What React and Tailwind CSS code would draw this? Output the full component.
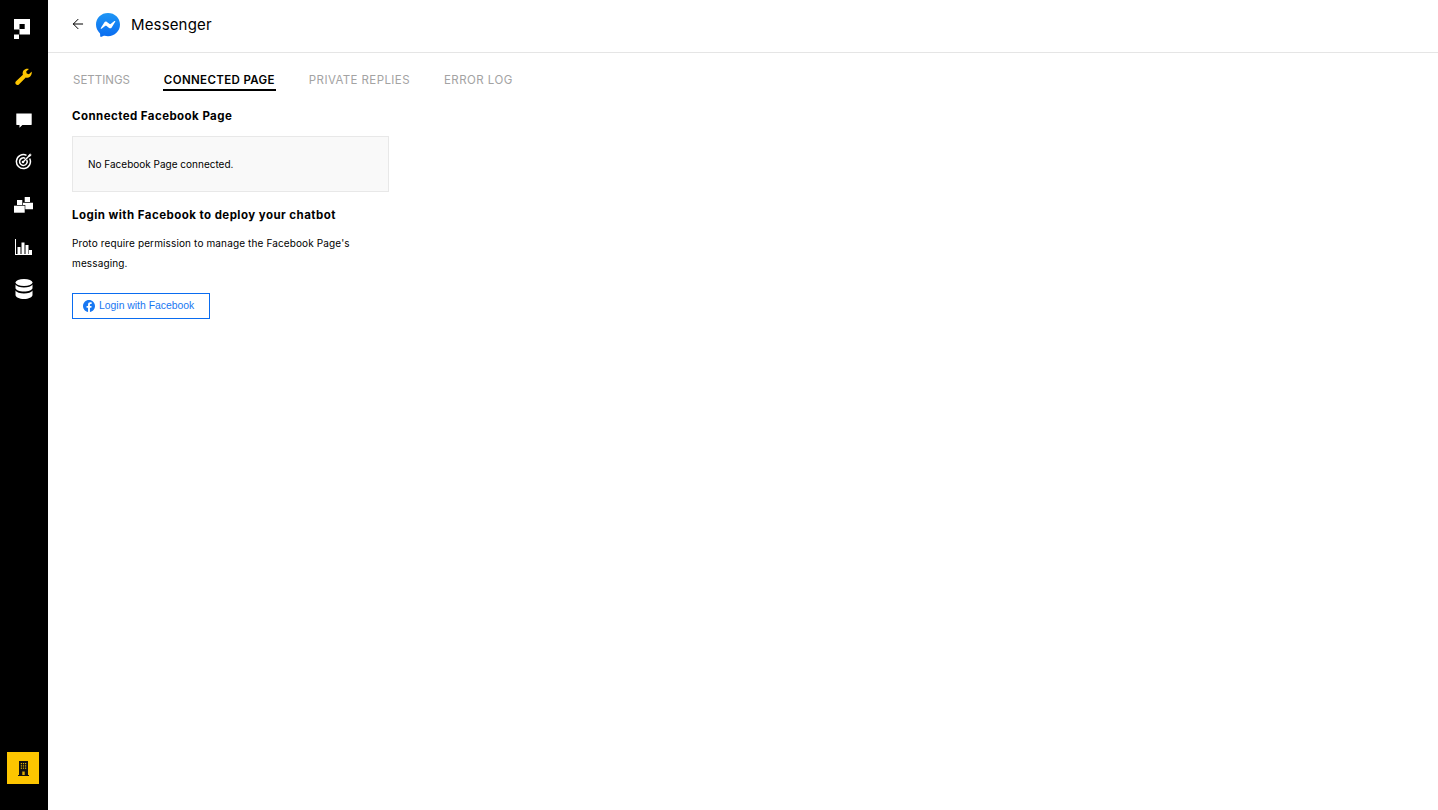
import React from 'react';
import { ArrowLeft } from 'lucide-react';

const Logo = () => (
  <svg width="16" height="20" viewBox="0 0 16 20" fill="#fff">
    <path fillRule="evenodd" d="M0 0h16v15.500H5.500V10.500H0V0zM5.500 5v5h5.200V5H5.500z" />
    <rect x="0" y="15.500" width="5" height="4.500" />
  </svg>
);

const Wrench = () => (
  <svg width="18" height="18" viewBox="0 0 18 18" fill="#fdc500">
    <path d="M16.800 3.600l-2.900 2.600-2.200-.6-.5-2.200L13.900.9c-1.900-.6-4-.1-5.200 1.300-1.100 1.300-1.300 3-.8 4.500L1 13.300c-.9.900-.9 2.200-.1 3 .8.900 2.100.9 3 .1l6.900-6.900c1.500.4 3.100.1 4.400-1 1.400-1.300 1.900-3.200 1.400-4.900h.2z" />
  </svg>
);

const Chat = () => (
  <svg width="16" height="16" viewBox="0 0 16 16" fill="#fff">
    <path d="M.700.400h14.600c.200 0 .4.200.4.400v10.800c0 .2-.2.400-.4.400H6.400l-2.900 2.800v-2.800H.700c-.2 0-.4-.2-.4-.4V.800c0-.2.200-.4.400-.4z" />
  </svg>
);

const Target = () => (
  <svg width="17" height="17" viewBox="0 0 17 17" fill="none" stroke="#fff">
    <path strokeWidth="1.500" d="M11.500 2.300A7 7 0 1 0 14.700 5.500" />
    <path strokeWidth="1.500" d="M10.200 5.300a3.800 3.800 0 1 0 1.500 1.500" />
    <path strokeWidth="1.400" d="M7.800 9.200 14.500 2.500" />
    <path fill="#fff" stroke="none" d="M13.400 2.200 15.300.3l.3 1.200 1.200.3-1.900 1.900-1.500-.1z" />
    <circle cx="8" cy="9" r="1.300" fill="#fff" stroke="none" />
  </svg>
);

const Blocks = () => (
  <svg width="19" height="16" viewBox="0 0 19 16" fill="#fff">
    <rect x="3" y="3" width="5.300" height="5" />
    <rect x="0" y="8.700" width="10.700" height="7" />
    <rect x="10.700" y="0" width="5.300" height="5" />
    <path d="M9 5.700h10v6.600h-7.700V8H9V5.700z" />
  </svg>
);

const Bars = () => (
  <svg width="17" height="16" viewBox="0 0 17 16" fill="#fff">
    <rect x="0" y="0" width="1" height="16" />
    <rect x="0" y="15" width="17" height="1" />
    <rect x="2.500" y="8" width="3" height="7" />
    <rect x="6.500" y="3.500" width="3" height="11.500" />
    <rect x="10.500" y="6" width="3" height="9" />
    <rect x="14" y="11" width="3" height="4" />
  </svg>
);

const Database = () => (
  <svg width="18" height="20" viewBox="0 0 18 20" fill="#fff">
    <ellipse cx="9" cy="3.500" rx="8.500" ry="3.500" />
    <path d="M.500 5.500C1.500 7.500 5 8.500 9 8.500s7.500-1 8.500-3v3.500c0 1.900-3.800 3.500-8.500 3.500S.500 10.900.500 9V5.500z" />
    <path d="M.500 11.500c1 2 4.500 3 8.500 3s7.500-1 8.500-3V16c0 2.200-3.800 4-8.500 4S.500 18.200.500 16v-4.500z" />
  </svg>
);

const Building = () => (
  <svg width="11" height="15" viewBox="0 0 11 15">
    <path fill="#111" d="M1 0h9v14h1v1H0v-1h1V0z" />
    <g fill="#e0ae00">
      <rect x="2.800" y="2" width="1.200" height="1.200" />
      <rect x="4.900" y="2" width="1.200" height="1.200" />
      <rect x="7" y="2" width="1.200" height="1.200" />
      <rect x="2.800" y="4.300" width="1.200" height="1.200" />
      <rect x="4.900" y="4.300" width="1.200" height="1.200" />
      <rect x="7" y="4.300" width="1.200" height="1.200" />
      <rect x="2.800" y="6.600" width="1.200" height="1.200" />
      <rect x="4.900" y="6.600" width="1.200" height="1.200" />
      <rect x="7" y="6.600" width="1.200" height="1.200" />
      <rect x="4.300" y="10.500" width="2.400" height="3.500" />
    </g>
  </svg>
);

const MessengerLogo = () => (
  <svg width="24" height="24" viewBox="0 0 24 24">
    <defs>
      <linearGradient id="mg" x1="0.500" y1="1" x2="0.500" y2="0">
        <stop offset="0" stopColor="#0a6cf0" />
        <stop offset="1" stopColor="#1e96f5" />
      </linearGradient>
    </defs>
    <path fill="url(#mg)" d="M12 0C5.300 0 0 4.900 0 11.600c0 3.500 1.400 6.500 3.800 8.600.2.200.3.400.3.700l.1 2.100c0 .7.700 1.100 1.300.8l2.400-1c.2-.1.400-.1.600-.1 1.100.3 2.300.5 3.500.5 6.700 0 12-4.900 12-11.600S18.700 0 12 0z" />
    <path fill="#fff" d="M4.800 15l3.500-5.600c.6-.9 1.700-1.100 2.600-.5l2.800 2.100c.3.200.6.200.9 0l3.800-2.900c.5-.4 1.200.2.800.7l-3.500 5.600c-.6.900-1.700 1.100-2.600.5l-2.800-2.100c-.3-.2-.6-.2-.9 0l-3.800 2.900c-.5.400-1.200-.2-.8-.7z" />
  </svg>
);

const FacebookIcon = () => (
  <svg width="12" height="12" viewBox="0 0 24 24" fill="#1877f2">
    <path d="M24 12c0-6.600-5.400-12-12-12S0 5.400 0 12c0 6 4.400 11 10.100 11.900v-8.400H7.100V12h3V9.400c0-3 1.800-4.700 4.500-4.700 1.300 0 2.700.2 2.700.2v3h-1.500c-1.500 0-2 .9-2 1.900V12h3.400l-.5 3.500h-2.800v8.400C19.600 23 24 18 24 12z" />
  </svg>
);

const navIcons = [
  { icon: Wrench, h: 'h-[42px]' },
  { icon: Chat, h: 'h-[42px] pt-[4px]' },
  { icon: Target, h: 'h-[42px] pr-[1px]' },
  { icon: Blocks, h: 'h-[44px] pr-[1px] pt-[2px]' },
  { icon: Bars, h: 'h-[42px] pr-[1px]' },
  { icon: Database, h: 'h-[42px] pr-[1px]' },
];

const tabs = [
  { label: 'SETTINGS', className: 'text-[#a3a3a3]' },
  { label: 'CONNECTED PAGE', className: 'font-semibold tracking-[0.36px] border-b-2 border-black' },
  { label: 'PRIVATE REPLIES', className: 'text-[#a3a3a3] tracking-[0.4px]' },
  { label: 'ERROR LOG', className: 'text-[#a3a3a3] tracking-[0.45px]' },
];

export default function App() {
  return (
    <div className="flex h-[810px] bg-white font-['Inter',sans-serif] text-black overflow-hidden">
      {/* Sidebar */}
      <aside className="w-12 shrink-0 bg-black flex flex-col items-center justify-between pb-[26px]">
        <div className="flex flex-col items-center w-full">
          <div className="h-[56px] w-full flex items-center justify-center pr-[4px] pt-[2px]">
            <Logo />
          </div>
          {navIcons.map((item, i) => (
            <div key={i} className={`${item.h} w-full flex items-center justify-center`}>
              <item.icon />
            </div>
          ))}
        </div>
        <div className="w-8 h-8 mr-[2px] bg-[#fdc500] flex items-center justify-center">
          <Building />
        </div>
      </aside>

      <main className="flex-1 min-w-0">
        {/* Header */}
        <header className="h-[53px] border-b border-[#e5e5e5] flex items-center pl-[22px] pb-[3px]">
          <ArrowLeft size={16} strokeWidth={1.5} className="text-black -mt-[1px]" />
          <div className="ml-[10px]">
            <MessengerLogo />
          </div>
          <h1 className="ml-[11px] pt-[1px] text-[15px] font-normal tracking-[0.15px]">Messenger</h1>
        </header>

        <div className="pl-6 pt-[19px]">
          {/* Tabs */}
          <div className="flex gap-[32px] text-[11.500px]">
            {tabs.map((tab) => (
              <div key={tab.label} className={`h-[19px] px-[1px] leading-[16px] ${tab.className}`}>
                {tab.label}
              </div>
            ))}
          </div>

          <div className="w-[317px]">
            <h2 className="mt-[17px] text-[11.500px] font-bold leading-[16px] tracking-[0.44px]">Connected Facebook Page</h2>
            <div className="mt-[12px] h-[56px] bg-[#f9f9f9] border border-[#e8e8e8] flex items-center pl-[15px] text-[10px]">
              No Facebook Page connected.
            </div>
            <h2 className="mt-[15px] text-[11.500px] font-bold leading-[16px] tracking-[0.45px]">Login with Facebook to deploy your chatbot</h2>
            <p className="mt-[10px] text-[10px] leading-[20px] tracking-[0.13px]">
              Proto require permission to manage the Facebook Page's messaging.
            </p>
            <button className="mt-[20px] w-[138px] h-[26px] border border-[#0a6cf0] flex items-center pl-[10px] gap-[4px] text-[10.400px] text-[#1877f2] font-['Liberation_Sans',sans-serif]">
              <FacebookIcon />
              Login with Facebook
            </button>
          </div>
        </div>
      </main>
    </div>
  );
}
